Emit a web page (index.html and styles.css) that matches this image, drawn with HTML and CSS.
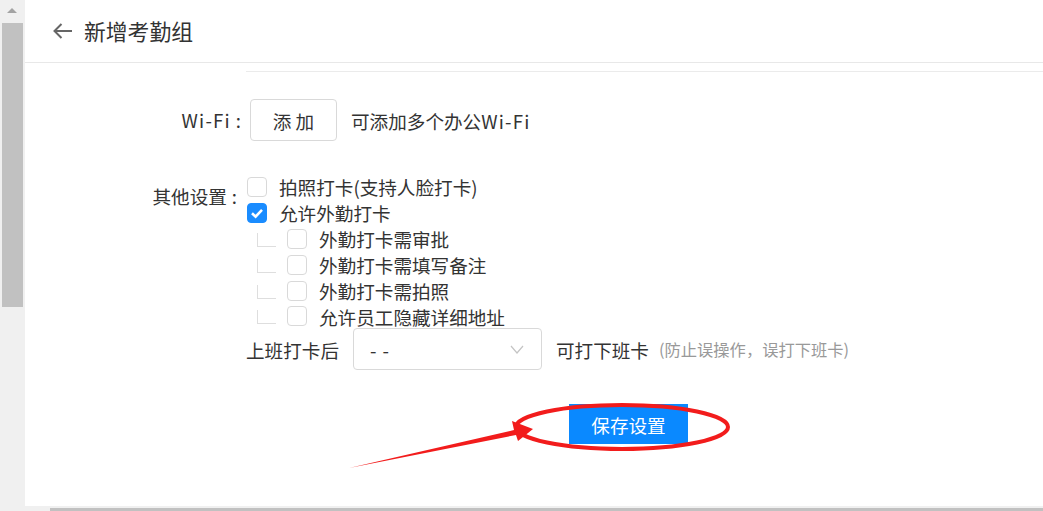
FILE: index.html
```html
<!DOCTYPE html>
<html lang="zh-CN">
<head>
<meta charset="utf-8">
<title>新增考勤组</title>
<link rel="stylesheet" href="styles.css">
</head>
<body>
<div class="screen">
  <div class="top">
    <aside class="vscroll">
      <span class="vscroll-up"></span>
      <span class="vscroll-thumb"></span>
    </aside>
    <main class="main">
      <header class="header">
        <svg class="back" width="20" height="16" viewBox="0 0 20 16"><path d="M1.5 8 H19 M8.5 1 L1.5 8 L8.5 15" fill="none" stroke="#666" stroke-width="2"/></svg>
        <h1 class="title">新增考勤组</h1>
      </header>
      <div class="divider"></div>
      <div class="form">
        <div class="label label-wifi"><span class="latin">Wi-Fi</span><span class="colon">:</span></div>
        <div class="field field-wifi">
          <button class="btn">添 加</button>
          <span class="hint">可添加多个办公<span class="latin">Wi-Fi</span></span>
        </div>

        <div class="label label-other">其他设置<span class="colon">:</span></div>
        <div class="field field-other">
          <div class="opt">
            <span class="cb"></span><span class="opt-text">拍照打卡(支持人脸打卡)</span>
          </div>
          <div class="opt">
            <span class="cb cb-on"><svg width="20" height="20" viewBox="0 0 20 20"><path d="M5 10.2 L8.6 13.6 L15 6.8" fill="none" stroke="#fff" stroke-width="2.6"/></svg></span><span class="opt-text">允许外勤打卡</span>
          </div>
          <div class="opt opt-sub">
            <span class="tree"></span><span class="cb"></span><span class="opt-text">外勤打卡需审批</span>
          </div>
          <div class="opt opt-sub">
            <span class="tree"></span><span class="cb"></span><span class="opt-text">外勤打卡需填写备注</span>
          </div>
          <div class="opt opt-sub">
            <span class="tree"></span><span class="cb"></span><span class="opt-text">外勤打卡需拍照</span>
          </div>
          <div class="opt opt-sub">
            <span class="tree"></span><span class="cb"></span><span class="opt-text">允许员工隐藏详细地址</span>
          </div>
          <div class="after">
            <span>上班打卡后</span>
            <div class="select">
              <span class="select-val">- -</span>
              <svg class="chev" width="14" height="9" viewBox="0 0 14 9"><path d="M1 1 L7 8 L13 1" fill="none" stroke="#c4c4c4" stroke-width="1.2"/></svg>
            </div>
            <span>可打下班卡</span>
            <span class="note">(防止误操作，误打下班卡)</span>
          </div>
          <div class="save-row">
            <button class="save">保存设置</button>
          </div>
        </div>
      </div>
    </main>
  </div>
  <div class="hscroll"><span class="hscroll-thumb"></span></div>
  <svg class="annot" width="1043" height="511" viewBox="0 0 1043 511">
    <ellipse cx="622" cy="427" rx="106" ry="22" fill="none" stroke="#f21c1c" stroke-width="4"/>
    <polygon points="349,468 514,430 512,421 533,429 518,441 516,435" fill="#f21c1c"/>
  </svg>
</div>
</body>
</html>
```

FILE: styles.css
```css
* { box-sizing: border-box; }
html, body {
  margin: 0;
  padding: 0;
  background: #fff;
}
body {
  font-family: "Noto Sans CJK SC", "Noto Sans", sans-serif;
  color: #333;
  font-size: 18.6px;
}
.screen {
  position: relative;
  width: 1043px;
  height: 511px;
  overflow: hidden;
}
.top {
  display: flex;
  height: 506px;
}
.vscroll {
  width: 25px;
  flex: none;
  background: #f0f0f0;
  display: flex;
  flex-direction: column;
}
.vscroll-up {
  width: 0;
  height: 0;
  border-left: 5.5px solid transparent;
  border-right: 5.5px solid transparent;
  border-bottom: 5px solid #a3a3a3;
  margin: 8px 0 0 7px;
}
.vscroll-thumb {
  display: block;
  height: 284px;
  margin: 10px 2px 0;
  background: #c1c1c1;
}
.main {
  flex: 1;
  background: #fff;
  display: flex;
  flex-direction: column;
}
.header {
  height: 63px;
  border-bottom: 1px solid #e8e8e8;
  display: flex;
  align-items: center;
  padding-left: 28px;
  padding-bottom: 1px;
}
.back { display: block; margin-right: 11px; }
.title {
  margin: 0;
  font-size: 21.8px;
  font-weight: normal;
  color: #333;
  line-height: 30px;
}
.divider {
  margin: 8px 0 0 221px;
  border-top: 1px solid #ebebeb;
  height: 0;
}
.form {
  display: grid;
  grid-template-columns: 221px 1fr;
  align-items: start;
  margin-top: 27px;
}
.label {
  text-align: right;
  padding-right: 5px;
  line-height: 26px;
  white-space: nowrap;
}
.latin { letter-spacing: 1.2px; }
.colon { margin-left: 5px; }
.label-wifi { padding-top: 8px; }
.label-other { margin-top: 33px; padding-top: 9px; padding-right: 9px; }
.field-wifi {
  display: flex;
  align-items: center;
}
.btn {
  margin-left: 4px;
  width: 87px;
  height: 42px;
  border: 1px solid #d9d9d9;
  border-radius: 4px;
  background: #fff;
  font-family: inherit;
  font-size: 18.6px;
  color: #333;
  padding: 0;
}
.hint { margin-left: 14px; }
.field-other {
  margin-top: 33px;
  display: flex;
  flex-direction: column;
}
.opt {
  display: flex;
  align-items: center;
  height: 25.9px;
  white-space: nowrap;
}
.cb {
  width: 20px;
  height: 20px;
  flex: none;
  border: 1px solid #d9d9d9;
  border-radius: 4px;
  background: #fff;
  margin-left: 1px;
}
.cb-on {
  background: #1a8cff;
  border-color: #1a8cff;
  display: flex;
  align-items: center;
  justify-content: center;
}
.cb-on svg { display: block; flex: none; }
.opt-text { margin-left: 12px; }
.tree {
  width: 19px;
  height: 14px;
  flex: none;
  align-self: flex-start;
  margin: 7px 0 0 11px;
  border-left: 1px solid #dedede;
  border-bottom: 1px solid #dedede;
}
.opt-sub .cb { margin-left: 11px; }
.after {
  display: flex;
  align-items: center;
  white-space: nowrap;
  margin-top: -1px;
}
.select {
  margin-left: 14px;
  width: 189px;
  height: 42px;
  border: 1px solid #d9d9d9;
  border-radius: 4px;
  display: flex;
  align-items: center;
  justify-content: space-between;
  padding: 0 17px 0 16px;
  margin-right: 14px;
}
.select-val { color: #333; letter-spacing: 1px; }
.chev { display: block; }
.note {
  margin-left: 10px;
  font-size: 16.3px;
  color: #999;
}
.save-row {
  margin-top: 34px;
  display: flex;
}
.save {
  margin-left: 323px;
  width: 119px;
  height: 40px;
  border: none;
  background: #0a89ff;
  color: #fff;
  font-family: inherit;
  font-size: 18.6px;
  padding: 0;
}
.hscroll {
  height: 5px;
  background: #f0f0f0;
  display: flex;
}
.hscroll-thumb {
  margin: 2px 0 0 50px;
  flex: 1;
  height: 3px;
  background: #c1c1c1;
}
.annot {
  position: absolute;
  left: 0;
  top: 0;
  pointer-events: none;
}
```
